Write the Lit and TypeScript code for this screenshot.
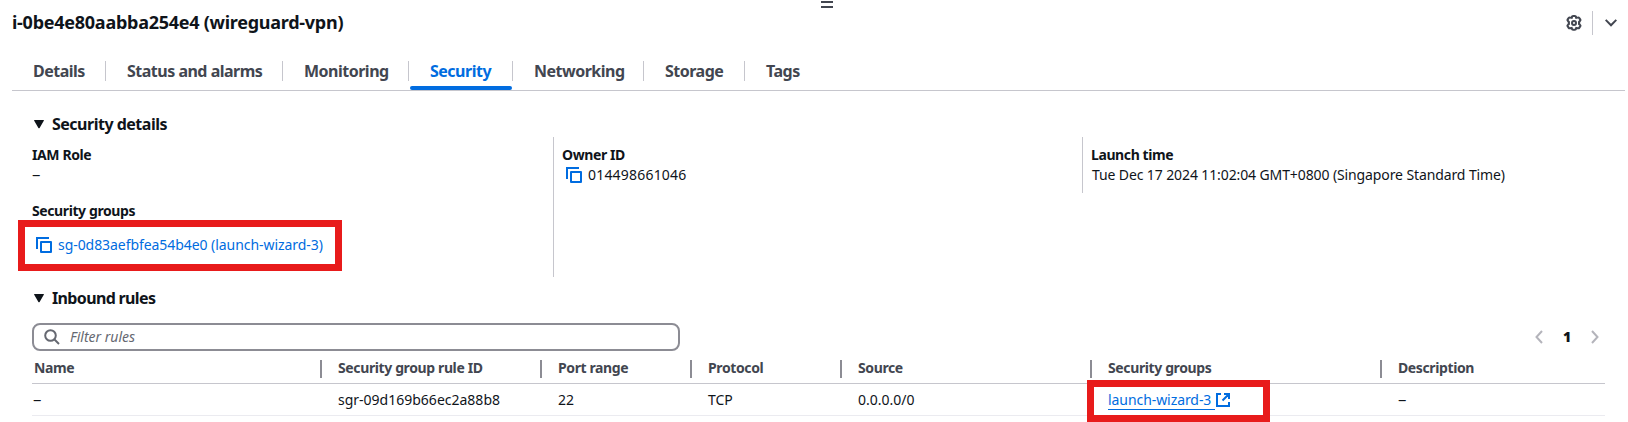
import { LitElement, html, css } from "lit";
import { customElement } from "lit/decorators.js";

const copyIcon = html`<svg class="copy" width="16" height="16" viewBox="0 0 16 16">
  <path d="M1 12V1h12" /><path d="M5 5h10v10H5z" stroke-linejoin="round" />
</svg>`;
const caret = html`<svg class="caret" width="10" height="9" viewBox="0 0 10 9"><path d="M.6 0h8.8q.9 0 .4.8L5.6 7.9q-.6.9-1.2 0L.2.8Q-.3 0 .6 0z" /></svg>`;
const tabs = ["Details", "Status and alarms", "Monitoring", "Security", "Networking", "Storage", "Tags"];
const columns = [
  { id: "name", head: "Name", cell: html`<span class="dash">–</span>` },
  { id: "sgr", head: "Security group rule ID", cell: "sgr-09d169b66ec2a88b8" },
  { id: "port", head: "Port range", cell: "22" },
  { id: "proto", head: "Protocol", cell: "TCP" },
  { id: "source", head: "Source", cell: "0.0.0.0/0" },
  {
    id: "groups",
    head: "Security groups",
    cell: html`<a class="ext"><span class="under">launch-wizard-3</span><svg width="14" height="14" viewBox="0 0 14 14"><path d="M5 1H1v12h12V9M8 1h5v5M13 1L6.500 7.500" /></svg></a><i class="mark mark-row"></i>`,
  },
  { id: "desc", head: "Description", cell: html`<span class="dash">–</span>` },
];

@customElement("app-root")
export class AppRoot extends LitElement {
  static styles = css`
    :host { display: block; height: 422px; overflow: hidden; position: relative; background: #fff; color: #0f141a;
      font: 14px/20px "Noto Sans", sans-serif; }
    * { box-sizing: border-box; }
    svg { display: block; flex: none; fill: none; }
    span, b { white-space: nowrap; }
    .grip { position: absolute; left: 821px; top: 1px; width: 12px; height: 7px; border: solid #424650; border-width: 2px 0; }
    .top { display: flex; height: 48px; padding: 10px 11px 0 12px; align-items: flex-start; }
    .title { font-size: 18px; line-height: 24px; font-weight: 700; flex: 1; letter-spacing: -0.26px; }
    .gear { margin-top: 5px; stroke: #424650; stroke-width: 2; overflow: visible; }
    .divider { width: 1px; height: 24px; background: #c6c6cd; margin: 1px 12px 0 10px; }
    .chev { margin-top: 9px; stroke: #424650; stroke-width: 2; }
    .tabs { display: flex; height: 43px; margin: 0 3px 0 12px; border-bottom: 1px solid #c6c6cd; }
    .tab { position: relative; height: 42px; padding: 11px 21px 0; font-size: 16px; line-height: 24px; font-weight: 700; color: #424650; white-space: nowrap; letter-spacing: -0.5px; }
    .tab:not(:last-child)::after { content: ""; position: absolute; right: 0; top: 13px; width: 1px; height: 20px; background: #c6c6cd; }
    .tab.on { color: #006ce0; }
    .tab.on::before { content: ""; position: absolute; left: 1px; right: 1px; bottom: 0; height: 4px; border-radius: 2px; background: #006ce0; }
    .w0 { width: 94px; } .w1 { width: 177px; } .w2 { width: 126px; } .w3 { width: 104px; }
    .w4 { width: 131px; } .w5 { width: 101px; } .w6 { width: 78px; }
    .section { display: flex; align-items: center; height: 20px; padding-left: 34px; gap: 8px; font-size: 16px; font-weight: 700; letter-spacing: -0.5px; }
    .caret { fill: #0f141a; }
    .s1 { margin-top: 23px; }
    .s2 { margin-top: 11px; letter-spacing: -0.65px; }
    .details { display: grid; grid-template-columns: 521px 529px 1fr; height: 140px; margin: 3px 0 0 32px; }
    .col { padding-top: 8px; }
    .col + .col { border-left: 1px solid #c6c6cd; padding-left: 8px; }
    .col:last-child { height: 56px; }
    .label { display: block; line-height: 20px; font-weight: 700; letter-spacing: -0.4px; }
    .line { display: flex; align-items: center; height: 20px; }
    .dash { display: inline-block; transform: scaleX(1.2); transform-origin: left; }
    .time { letter-spacing: -0.11px; padding-left: 1px; }
    .num { letter-spacing: 0.2px; }
    .sg { letter-spacing: -0.06px; }
    .owner { padding-left: 4px; gap: 6px; }
    .copy, .ext svg { stroke: #006ce0; stroke-width: 2; }
    .sglabel { margin-top: 16px; }
    .sgline { position: relative; height: 20px; margin-top: 14px; padding-left: 4px; gap: 6px; color: #006ce0; }
    .mark { position: absolute; border: 7px solid #e81b1b; }
    .mark-sg { left: -14px; top: -15px; width: 324px; height: 51px; }
    .filterbar { display: flex; justify-content: space-between; margin: 15px 24px 0 32px; height: 28px; }
    .input { display: flex; align-items: center; width: 648px; height: 28px; border: 2px solid #8c8c94; border-radius: 8px; padding-left: 10px; gap: 10px; color: #656871; font-style: italic; }
    .input svg { stroke: #656871; stroke-width: 2; }
    .pager { display: flex; align-items: center; padding-right: 5px; font-weight: 700; }
    .pager svg { stroke: #b4b4bb; stroke-width: 2; }
    .pager b { width: 48px; text-align: center; }
    .grid { display: grid; grid-template-columns: 290px 220px 150px 150px 250px 290px 1fr; margin: 0 23px 0 32px; }
    .head { height: 33px; border-bottom: 1px solid #c6c6cd; font-weight: 700; color: #424650; letter-spacing: -0.38px; padding-top: 1px; }
    .row { height: 32px; border-bottom: 1px solid #ebebf0; }
    .cell { display: flex; align-items: center; position: relative; padding-left: 16px; }
    .cell.name { padding-left: 2px; }
    .row .cell.name { padding-left: 1px; }
    .head .cell + .cell::before { content: ""; position: absolute; left: -2px; top: 8px; width: 2px; height: 18px; background: #8c8c94; }
    .ext { display: flex; align-items: center; gap: 1px; color: #006ce0; letter-spacing: -0.07px; }
    .under { border-bottom: 1px solid #006ce0; padding-right: 4px; height: 20px; line-height: 19px; }
    .mark-row { left: -5px; top: -4px; width: 183px; height: 42px; }
  `;

  render() {
    return html`
      <i class="grip"></i>
      <header class="top">
        <span class="title">i-0be4e80aabba254e4 (wireguard-vpn)</span>
        <svg class="gear" width="16" height="16" viewBox="0 0 16 16">
          <path d="M6.200 1.900Q6.400 1 7.200 1h1.600q.8 0 1 .9l.3 1 1.200-.3q.9-.3 1.400.4l.9 1.500q.4.8-.2 1.400l-.8.9v2.200l.8.9q.6.600.2 1.400l-.9 1.500q-.5.700-1.400.4l-1.200-.3-.3 1q-.2.900-1 .9H7.200q-.8 0-1-.9l-.3-1-1.200.3q-.9.300-1.400-.4l-.9-1.500q-.4-.8.2-1.400l.8-.9V6.800l-.8-.9Q2 5.300 2.400 4.500L3.300 3q.5-.7 1.400-.4l1.200.3z" transform="translate(-1 0) scale(1.120 1)" />
          <circle cx="8" cy="8" r="2" />
        </svg>
        <i class="divider"></i>
        <svg class="chev" width="12" height="8" viewBox="0 0 12 8"><path d="M.7.9L6 6.300 11.300.9" /></svg>
      </header>
      <nav class="tabs">
        ${tabs.map((t, i) => html`<div class="tab w${i} ${t === "Security" ? "on" : ""}">${t}</div>`)}
      </nav>
      <div class="section s1">${caret}<span>Security details</span></div>
      <div class="details">
        <div class="col">
          <b class="label">IAM Role</b>
          <div class="line"><span class="dash">–</span></div>
          <b class="label sglabel">Security groups</b>
          <div class="line sgline">${copyIcon}<span class="sg">sg-0d83aefbfea54b4e0 (launch-wizard-3)</span><i class="mark mark-sg"></i></div>
        </div>
        <div class="col">
          <b class="label">Owner ID</b>
          <div class="line owner">${copyIcon}<span class="num">014498661046</span></div>
        </div>
        <div class="col">
          <b class="label">Launch time</b>
          <div class="line"><span class="time">Tue Dec 17 2024 11:02:04 GMT+0800 (Singapore Standard Time)</span></div>
        </div>
      </div>
      <div class="section s2">${caret}<span>Inbound rules</span></div>
      <div class="filterbar">
        <div class="input">
          <svg width="16" height="16" viewBox="0 0 16 16"><circle cx="6.500" cy="6.500" r="5.300" /><path d="M10.500 10.500L15 15" /></svg>
          <span>Filter rules</span>
        </div>
        <div class="pager">
          <svg width="8" height="14" viewBox="0 0 8 14"><path d="M7 1L1.500 7 7 13" /></svg>
          <b>1</b>
          <svg width="8" height="14" viewBox="0 0 8 14"><path d="M1 1l5.500 6L1 13" /></svg>
        </div>
      </div>
      <div class="grid head">${columns.map((c) => html`<div class="cell ${c.id}"><span>${c.head}</span></div>`)}</div>
      <div class="grid row">${columns.map((c) => html`<div class="cell ${c.id}"><span class="val">${c.cell}</span></div>`)}</div>
    `;
  }
}
